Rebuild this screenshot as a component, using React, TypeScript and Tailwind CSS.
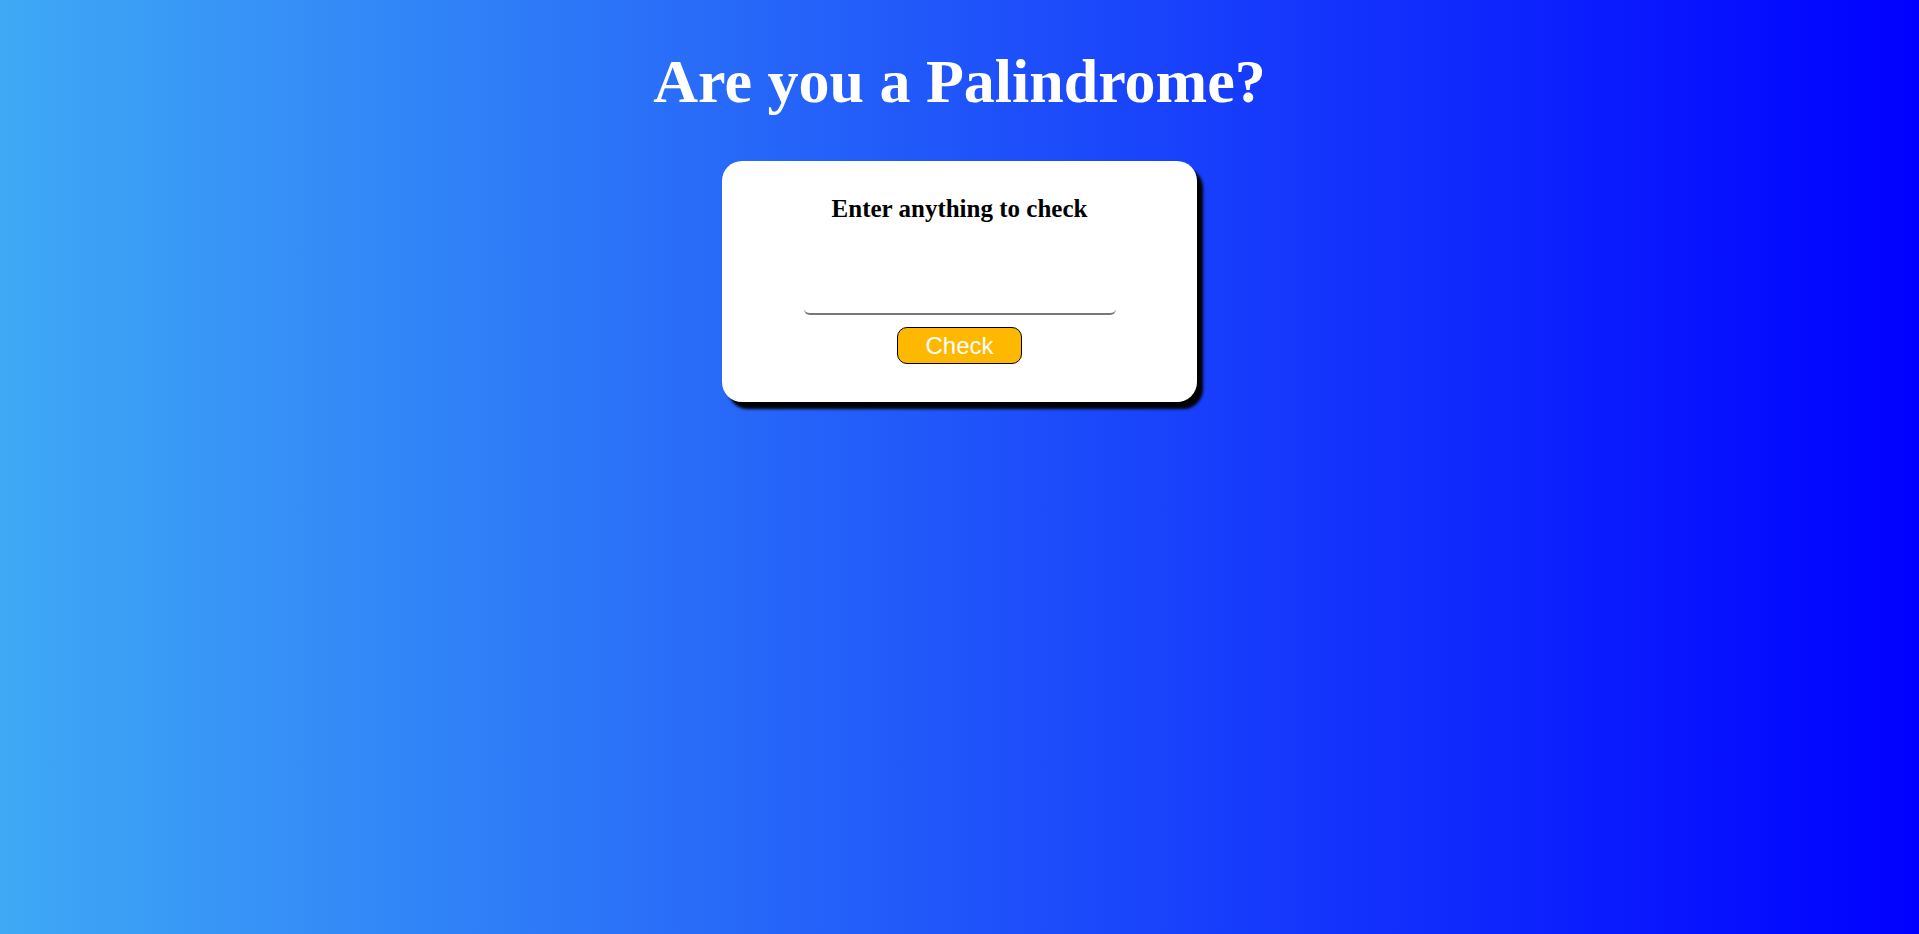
import React, { useState } from 'react';

const App = () => {
    const [text, setText] = useState('');
    const [result, setResult] = useState<string | null>(null);

    const check = () => {
        const clean = text.toLowerCase().replace(/[^a-z0-9]/g, '');
        if (!clean) { setResult(null); return; }
        setResult(clean === clean.split('').reverse().join('') ? 'Yes!' : 'No.');
    };

    return (
        <div className="min-h-screen w-full bg-[linear-gradient(to_right,#3fa9f5,#0000ff)] flex flex-col items-center pt-[46px] font-['Liberation_Serif',serif]">
            <h1 className="text-[62px] font-bold text-white leading-[71px]">Are you a Palindrome?</h1>
            <div className="mt-[44px] w-[475px] h-[241px] bg-white rounded-[20px] shadow-[6px_7px_3px_#000] flex flex-col items-center pt-[34px]">
                <h2 className="text-[25px] font-bold leading-[27px] text-black">Enter anything to check</h2>
                <input
                    type="text"
                    value={text}
                    onChange={(e) => setText(e.target.value)}
                    className="mt-[53px] w-[312px] h-[40px] border-0 border-b-2 border-[#777] rounded-[6px] outline-none text-center text-[20px] font-['Liberation_Sans',sans-serif]"
                />
                <button
                    onClick={check}
                    className="mt-[12px] w-[125px] h-[37px] bg-[#ffb800] border border-black rounded-[10px] text-white text-[24px] leading-none font-['Liberation_Sans',sans-serif]"
                >
                    Check
                </button>
                {result && <p className="mt-2 text-lg font-bold">{result}</p>}
            </div>
        </div>
    );
};

export default App;
